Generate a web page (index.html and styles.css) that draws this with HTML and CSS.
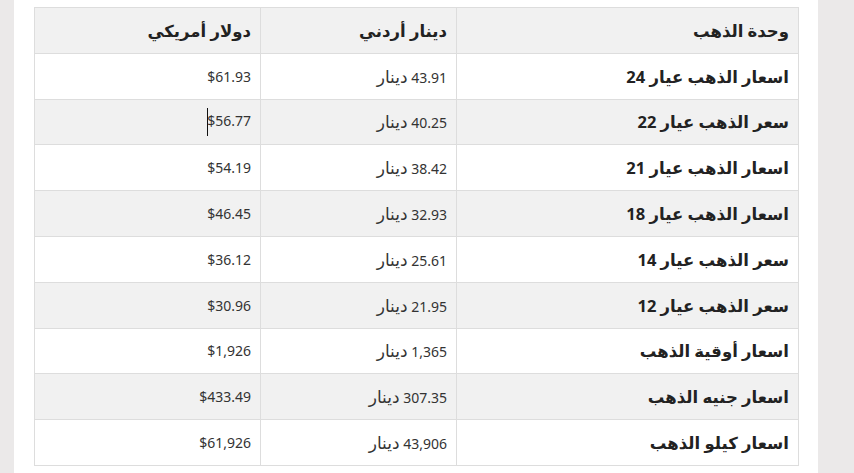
FILE: index.html
```html
<!DOCTYPE html>
<html lang="ar">
<head>
<meta charset="utf-8">
<link rel="stylesheet" href="styles.css">
</head>
<body>
<div class="page">
  <div class="content">
    <table class="prices" dir="rtl">
      <colgroup>
        <col class="c1"><col class="c2"><col class="c3">
      </colgroup>
      <thead>
        <tr><th>وحدة الذهب</th><th>دينار أردني</th><th>دولار أمريكي</th></tr>
      </thead>
      <tbody>
        <tr><th>اسعار الذهب عيار 24</th><td>43.91 <span class="ar">دينار</span></td><td>$61.93</td></tr>
        <tr><th>سعر الذهب عيار 22</th><td>40.25 <span class="ar">دينار</span></td><td>$56.77<span class="caret"></span></td></tr>
        <tr><th>اسعار الذهب عيار 21</th><td>38.42 <span class="ar">دينار</span></td><td>$54.19</td></tr>
        <tr><th>اسعار الذهب عيار 18</th><td>32.93 <span class="ar">دينار</span></td><td>$46.45</td></tr>
        <tr><th>سعر الذهب عيار 14</th><td>25.61 <span class="ar">دينار</span></td><td>$36.12</td></tr>
        <tr><th>سعر الذهب عيار 12</th><td>21.95 <span class="ar">دينار</span></td><td>$30.96</td></tr>
        <tr><th>اسعار أوقية الذهب</th><td>1,365 <span class="ar">دينار</span></td><td>$1,926</td></tr>
        <tr><th>اسعار جنيه الذهب</th><td>307.35 <span class="ar">دينار</span></td><td>$433.49</td></tr>
        <tr><th>اسعار كيلو الذهب</th><td>43,906 <span class="ar">دينار</span></td><td>$61,926</td></tr>
      </tbody>
    </table>
  </div>
</div>
</body>
</html>
```

FILE: styles.css
```css
html, body {
  margin: 0;
  padding: 0;
  background: #ebe9e9;
  height: 100%;
}
body {
  font-family: "Noto Sans", "Open Sans", "DejaVu Sans", sans-serif;
  color: #333;
}
.page {
  display: flex;
  height: 100%;
  padding-left: 14px;
}
.content {
  width: 764px;
  background: #fff;
  padding: 7px 20px 0 20px;
}
.prices {
  width: 764px;
  border-collapse: collapse;
  table-layout: fixed;
}
.prices col.c1 { width: 342px; }
.prices col.c2 { width: 196px; }
.prices col.c3 { width: 226px; }
.prices th, .prices td {
  border: 1px solid #dddddd;
  height: 45.8px;
  padding: 0 9px 0 8px;
  text-align: right;
  vertical-align: middle;
  box-sizing: border-box;
}
.prices th {
  font-weight: bold;
  font-size: 16.5px;
  color: #222;
}
.prices td {
  font-size: 14px;
  color: #333;
}
.prices td .ar {
  font-size: 17px;
}
.prices thead tr,
.prices tbody tr:nth-child(even) {
  background: #f1f1f1;
}
.caret {
  display: inline-block;
  width: 1px;
  height: 28px;
  background: #111;
  vertical-align: middle;
  margin-right: -1px;
}
```
